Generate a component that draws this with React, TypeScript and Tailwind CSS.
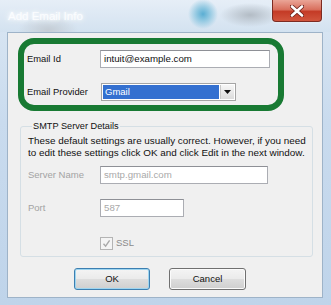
import React from 'react'

const font = "font-['Liberation_Sans',Arial,sans-serif]"

function CloseButton() {
  return (
    <div className="w-[50px] h-[22px] rounded-b-[4px] border border-t-0 border-[#7d2b22] bg-[linear-gradient(180deg,#eaa597_0%,#d9705e_45%,#c43b26_55%,#d1553d_100%)] flex items-center justify-center shadow-[0_0_3px_rgba(255,255,255,0.7)]">
      <svg width="14" height="12" viewBox="0 0 14 12">
        <path d="M2 1.5 L12 10.5 M12 1.5 L2 10.5" stroke="#6b2019" strokeWidth="4.2" strokeLinecap="round" />
        <path d="M2 1.5 L12 10.5 M12 1.5 L2 10.5" stroke="#ffffff" strokeWidth="2.6" strokeLinecap="round" />
      </svg>
    </div>
  )
}

function TextBox({ value, width, disabled }: { value: string; width: number; disabled?: boolean }) {
  return (
    <div
      className={`h-[18px] border border-[#abadb3] border-t-[#8e9096] bg-white flex items-center pl-[3px] text-[9.7px] ${disabled ? 'text-[#a9a9a9]' : 'text-[#111]'}`}
      style={{ width }}
    >
      {value}
    </div>
  )
}

function WinButton({ label, isDefault }: { label: string; isDefault?: boolean }) {
  return (
    <div
      className={`h-[22px] rounded-[3px] border flex items-center justify-center text-[9.5px] text-[#111] bg-[linear-gradient(180deg,#f4f4f4_0%,#ebebeb_48%,#dddddd_52%,#cfcfcf_100%)] ${
        isDefault
          ? 'w-[76px] border-[#3c7fb1] shadow-[inset_0_0_0_1px_#9ed5f0]'
          : 'w-[77px] border-[#707070] shadow-[inset_0_0_0_1px_#fbfbfb]'
      }`}
    >
      {label}
    </div>
  )
}

export default function App() {
  return (
    <div
      className={`w-[331px] h-[305px] overflow-hidden flex flex-col ${font} bg-[linear-gradient(180deg,#dbe7f3_0%,#c9dbee_40%,#bfd4ea_100%)]`}
    >
      {/* title bar */}
      <div className="h-[32px] shrink-0 flex items-start justify-between pl-[8px] pr-[9px] bg-[radial-gradient(circle_at_203px_14px,#5aaed3_0px,#8cc6e0_6px,rgba(200,222,238,0)_15px),radial-gradient(ellipse_30px_12px_at_250px_15px,#b3bcc5,rgba(200,210,220,0)),radial-gradient(ellipse_30px_14px_at_48px_30px,#c4ccd4,rgba(200,210,220,0)),linear-gradient(180deg,#e6eef7,#d3e2f0)]">
        <div className="mt-[9px] text-[11.5px] leading-[14px] text-[#fbfdff] [text-shadow:0_0_3px_#ffffff,0_0_6px_#ffffff,0_0_8px_#eef5fc]">
          Add Email Info
        </div>
        <CloseButton />
      </div>

      {/* client area */}
      <div className="ml-[7px] mr-[8px] h-[266px] shrink-0 border border-[#9eb3c8] bg-[#f0f0f0] flex flex-col">
        {/* highlighted section */}
        <div className="ml-[10px] mt-[5px] w-[266px] h-[73px] border-[6px] border-[#187a33] rounded-[16px] pl-[3px] pt-[6px]">
          <div className="flex items-center h-[18px]">
            <span className="w-[73px] text-[9.4px] text-[#111]">Email Id</span>
            <TextBox value="intuit@example.com" width={170} />
          </div>
          <div className="flex items-center h-[18px] mt-[15px]">
            <span className="w-[74px] text-[9.4px] text-[#111]">Email Provider</span>
            <div className="w-[135px] h-[18px] border border-[#a5a5a5] bg-white flex items-center p-[1px]">
              <div className="flex-1 h-full bg-[#3470d0] text-white text-[9.5px] flex items-center pl-[2px]">Gmail</div>
              <div className="w-[14px] h-full ml-[1px] bg-[linear-gradient(180deg,#f6f6f6,#dcdcdc)] border-l border-[#c8c8c8] flex items-center justify-center">
                <svg width="7" height="4" viewBox="0 0 7 4">
                  <path d="M0 0 L7 0 L3.5 4 Z" fill="#111" />
                </svg>
              </div>
            </div>
          </div>
        </div>

        {/* SMTP group box */}
        <fieldset className="ml-[12px] mt-[9px] w-[293px] border border-[#d5dfe5] rounded-[3px] pl-[7px] pb-[5px]">
          <legend className="ml-[4px] px-[1px] text-[9.2px] leading-[12px] text-[#111]">SMTP Server Details</legend>
          <p className="mt-[3px] text-[9.9px] leading-[11.7px] text-[#111] whitespace-nowrap">
            These default settings are usually correct. However, if you need
            <br />
            to edit these settings click OK and click Edit in the next window.
          </p>
          <div className="flex items-center mt-[8px]">
            <span className="w-[72px] text-[9.5px] text-[#a3a3a3]">Server Name</span>
            <TextBox value="smtp.gmail.com" width={168} disabled />
          </div>
          <div className="flex items-center mt-[15px]">
            <span className="w-[72px] text-[9.5px] text-[#a3a3a3]">Port</span>
            <TextBox value="587" width={84} disabled />
          </div>
          <div className="flex items-center mt-[19px] pl-[72px]">
            <div className="w-[13px] h-[13px] border border-[#b4b4b4] bg-[#f4f4f4] flex items-center justify-center">
              <svg width="9" height="9" viewBox="0 0 9 9">
                <path d="M1.5 4.8 L3.6 7.2 L7.6 1.4" stroke="#a8a8a8" strokeWidth="1.4" fill="none" />
              </svg>
            </div>
            <span className="ml-[3px] text-[9.5px] text-[#8a8a8a]">SSL</span>
          </div>
        </fieldset>

        {/* buttons */}
        <div className="flex mt-[11px] ml-[66px] gap-[19px]">
          <WinButton label="OK" isDefault />
          <WinButton label="Cancel" />
        </div>
      </div>
    </div>
  )
}
